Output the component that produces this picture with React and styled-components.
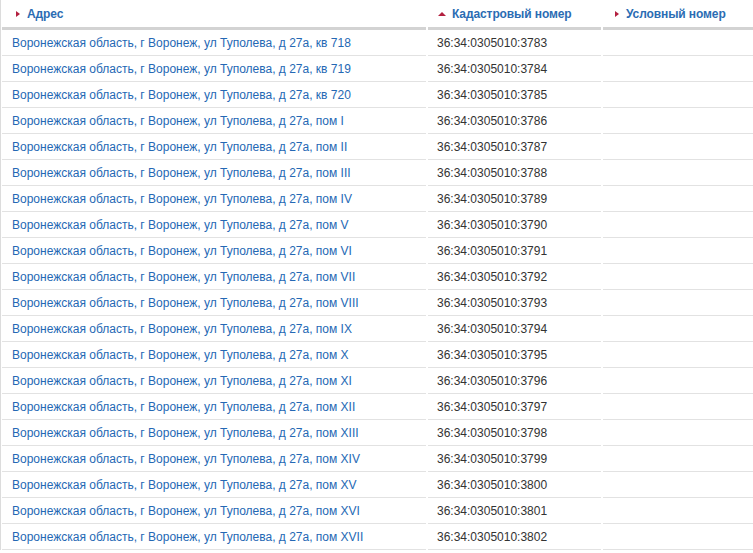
import React from "react";
import styled, { createGlobalStyle } from "styled-components";

const GlobalStyle = createGlobalStyle`
  body {
    margin: 0;
    background: #fff;
    font-family: "Liberation Sans", Arial, sans-serif;
  }
`;

const rows = [
  ["кв 718", "3783"],
  ["кв 719", "3784"],
  ["кв 720", "3785"],
  ["пом I", "3786"],
  ["пом II", "3787"],
  ["пом III", "3788"],
  ["пом IV", "3789"],
  ["пом V", "3790"],
  ["пом VI", "3791"],
  ["пом VII", "3792"],
  ["пом VIII", "3793"],
  ["пом IX", "3794"],
  ["пом X", "3795"],
  ["пом XI", "3796"],
  ["пом XII", "3797"],
  ["пом XIII", "3798"],
  ["пом XIV", "3799"],
  ["пом XV", "3800"],
  ["пом XVI", "3801"],
  ["пом XVII", "3802"],
];

export default function App() {
  return (
    <>
      <GlobalStyle />
      <Grid>
        <HeadCell $pad={14}>
          <Arrow $dir="right" />
          Адрес
        </HeadCell>
        <HeadCell $pad={10}>
          <Arrow $dir="up" />
          Кадастровый номер
        </HeadCell>
        <HeadCell $pad={12}>
          <Arrow $dir="right" />
          Условный номер
        </HeadCell>

        {rows.map(([unit, num]) => (
          <React.Fragment key={num}>
            <Cell $pad={10}>
              <Link href="#">Воронежская область, г Воронеж, ул Туполева, д 27а, {unit}</Link>
            </Cell>
            <Cell $pad={9}>36:34:0305010:{num}</Cell>
            <Cell $pad={9} />
          </React.Fragment>
        ))}
      </Grid>
    </>
  );
}

const Grid = styled.div`
  display: grid;
  grid-template-columns: 424px 173px 150px;
  column-gap: 2px;
  padding-left: 1px;
  border-left: 1px solid #dcdcdc;
  width: 751px;
`;

const HeadCell = styled.div`
  display: flex;
  align-items: center;
  height: 27px;
  padding-left: ${(p) => p.$pad}px;
  border-bottom: 3px solid #d3d3d3;
  font-size: 12px;
  font-weight: bold;
  letter-spacing: -0.1px;
  color: #2b6cb3;
`;

const Arrow = styled.span`
  width: 0;
  height: 0;
  margin-right: 7px;
  ${(p) =>
    p.$dir === "up"
      ? `
    border-left: 4px solid transparent;
    border-right: 4px solid transparent;
    border-bottom: 4px solid #b3203f;
    margin-right: 6px;
  `
      : `
    border-top: 3px solid transparent;
    border-bottom: 3px solid transparent;
    border-left: 4px solid #b3203f;
  `}
`;

const Cell = styled.div`
  display: flex;
  align-items: center;
  height: 25px;
  padding-left: ${(p) => p.$pad}px;
  border-bottom: 1px solid #e2e2e2;
  font-size: 12px;
  color: #333;
  white-space: nowrap;
`;

const Link = styled.a`
  color: #2468b4;
  text-decoration: none;
`;
